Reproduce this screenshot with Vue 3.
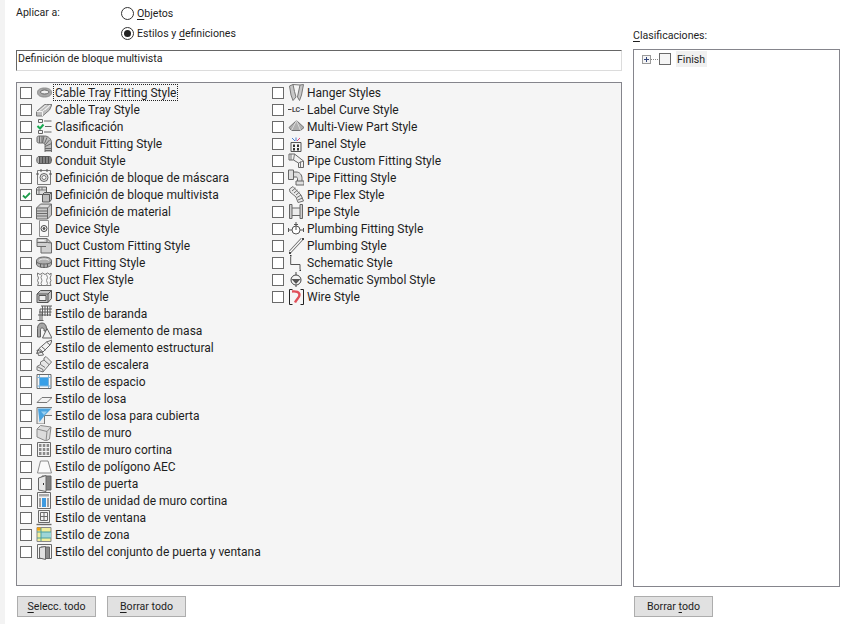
<script setup>
const G = '#5f5f5f'
const p = (d, f = 'none', s = G, w = 1) => ({ d, f, s, w })
const ribs = (xs, y1, y2) => xs.map(x => `M${x} ${y1}V${y2}`).join('')

const left = [
  ['Cable Tray Fitting Style', [p('M1.500 8.500C1.500 5.500 4.500 4 8.500 4s7 1.500 7 4.500-3 4.500-7 4.500-7-1.500-7-4.500z', '#a8a8a8', '#8a8a8a'), p('M4.500 8C4.500 7 6.500 6 8.500 6s4.500 1 4.500 2-2 2-4.500 2-4-1-4-2z', '#efefef', '#666')]],
  ['Cable Tray Style', [p('M.5 15V10.500L8.500 3.500h7.500L13.500 9 6.500 15z', '#bdbdbd', '#7a7a7a'), p('M.5 10.500H6.500V15M6.500 10.500L14 4M3 10L10.500 4M9 9l4.500-4', 'none', '#f2f2f2')]],
  ['Clasificación', [p('M2.500 1.500h4v3h-4zM2.500 12.500h4v3h-4zM8 3h7.500M9 8.500h6.500M8 14h7.500', 'none', '#666'), p('M1.500 8l2.500 2.500 3.500-4', 'none', '#15a84f', 2)]],
  ['Conduit Fitting Style', [p('M1 2.500C1 1.500 2 1 3 1h5.500c4 0 7 3 7 7v9.500H9V10.500C9 9 8 8 6.500 8H3C2 8 1 7.500 1 6.500z', '#bcbcbc', '#6a6a6a'), p(ribs([3.5, 6], 1, 8) + 'M8 1L6.500 8M11 2.500L8.500 8.500M13.500 5L9 10M15.500 8.500L9 11.500M9 13.500h6.500M9 15.500h6.500', 'none', '#6a6a6a')]],
  ['Conduit Style', [p('M3 4.500h10.500c1.200 0 2 1.500 2 3.500s-.8 3.500-2 3.500H3C1.500 11.500.8 10 .8 8S1.500 4.500 3 4.500z', '#b4b4b4', '#606060'), p(ribs([3.500, 5, 6.500, 8, 9.500, 11, 12.500, 14], 4.500, 11.500), 'none', '#505050')]],
  ['Definición de bloque de máscara', [p('M1.500 1.500h13v14h-13z', '#f4f4f4', '#7a7a7a'), p('M4 8.500a4 4 0 1 0 8 0a4 4 0 1 0-8 0z', '#e4e4e4', '#666'), p('M6 8.500a2 2 0 1 0 4 0a2 2 0 1 0-4 0z', '#fff', '#777'), p('M0 5h3M13 5h3M5 0v3M11 0v3', 'none', '#555')]],
  ['Definición de bloque multivista', [p('M.5 2.500L2 1h8.500v7.500H.5z', '#dcdcdc', '#5a5a5a'), p('M3 1v7.500M.5 4h10M6 1v3', 'none', '#777'), p('M6.500 8.500l2-2h7v7l-2 2.500h-7z', '#bdbdbd', '#5a5a5a'), p('M6.500 8.500h7V16M13.500 8.500l2-2', 'none', '#5a5a5a')]],
  ['Definición de material', [p('M.5 5L4.500 1h11v11l-4 4H.5z', '#c8c8c8', '#6a6a6a'), p('M.5 5h11v11M11.500 5l4-4M.5 8h11M.5 10.500h11M.5 13h11', 'none', '#6a6a6a'), p('M4.500 3h8', 'none', '#f2f2f2')]],
  ['Device Style', [p('M3.500 .5h9v16h-9z', '#f8f8f8', '#8f8f8f'), p('M5 8.500a3 3 0 1 0 6 0a3 3 0 1 0-6 0z', 'none', '#444'), p('M7 8.500a1 1 0 1 0 2 0a1 1 0 1 0-2 0z', '#666', '#444')]],
  ['Duct Custom Fitting Style', [p('M1 1.500h10L15.500 6v10H5V9.500H1z', '#cfcfcf', '#6a6a6a'), p('M1 5.500h10.500l4 .5M5 9.500h5M11 1.500v4', 'none', '#6a6a6a'), p('M2.500 3.500h6', 'none', '#f5f5f5')]],
  ['Duct Fitting Style', [p('M.5 7c0-2.500 3-4 7.500-4s7.500 1.500 7.500 4v3c0 2-3 3.500-7.500 3.500S.5 12 .5 10z', '#b0b0b0', '#5f5f5f'), p('M.5 7c0 2 3 3 7.500 3s7.500-1 7.500-3M4.500 10v3M8 10.500v3M11.500 10v3', 'none', '#5f5f5f'), p('M3 6.500c1-1 3-1.500 5-1.500s4 .5 5 1.500', 'none', '#eee')]],
  ['Duct Flex Style', [p('M1.500 2l2.500 1.500L6.500 2 9 3.500 11.500 2 14 3.500 15 2v2.500l-1 2.500 1 2.500-1 2.500 1 2.500H1.500l1-2.500-1-2.500 1-2.500-1-2.500z', '#f7f7f7', '#777'), p('M6 3.500l-1 3 1 3-1 3 1 2M10.500 3.500l1 3-1 3 1 3-1 2', 'none', '#888')]],
  ['Duct Style', [p('M1 6L4.500 2.500h11v8L12 14.500H1z', '#c4c4c4', '#555'), p('M3 7.500h7v5H3z', '#eee', '#555'), p('M1 6h11v8.500M12 6l3.500-3.500', 'none', '#555')]],
  ['Estilo de baranda', [p('M5 1h11M4 4h12M3 7h12.500M2 10h13', 'none', '#5f5f5f'), p('M6.500 1v10M9 1v10M11.500 1v10M14 1v10M4 4v11M6 7v9', 'none', '#5f5f5f'), p('M1.500 15.500h6', 'none', '#5f5f5f')]],
  ['Estilo de elemento de masa', [p('M1.500 15V6.500C1.500 3 3.500 1 6 1s4.500 2 4.500 5.500V9H8V7.500C8 6.500 7 6 6 6S4.500 6.500 4.500 7.500V15z', '#a6a6a6', '#5f5f5f'), p('M6.500 16L11 6.500 16 16z', '#efefef', '#5f5f5f')]],
  ['Estilo de elemento estructural', [p('M.5 14.500L3 9.500 10.500 3l5.500-2-1.500 4.500L7 13z', '#f2f2f2', '#666'), p('M1 11l5 2 1.500 3-5 .5zM3 9.500L7 13M5.500 7.500L9.500 11M10.500 3l3.500 3', 'none', '#666')]],
  ['Estilo de escalera', [p('M1 10.500l3.500-2V6L8 4V2L10 .5 15.500 6 7 16 1 14z', '#e6e6e6', '#777'), p('M4.500 8.500l4.500 3M8 4l5 4.500M1 10.500l6 3V16', 'none', '#777')]],
  ['Estilo de espacio', [p('M1 1.500h14v14H1z', '#f7f7f7', '#6a6a6a'), p('M3.500 4.500h9v8.500h-9z', '#38a0e8', 'none'), p('M1 4.500h14M3.500 2v13M1 13h14M12.500 2v13', 'none', '#7fb4da', 1)]],
  ['Estilo de losa', [p('M1 12.500L6 7.500h10l-5 5z', '#f2f2f2', '#777')]],
  ['Estilo de losa para cubierta', [p('M1 .5h15.500v8H8.500v8.500H1z', '#ececec', '#777'), p('M2 1.500h13.500L9 8 3.500 15z', '#4aa3df', 'none'), p('M5 4.500h6L8 8z', '#9cd0f0', 'none')]],
  ['Estilo de muro', [p('M1 5l3.500-3.500L15 3l-1.500 12-3.500 2-9-4z', '#dcdcdc', '#8a8a8a'), p('M1 5l10 2.500L15 3M11 7.500L10 17', 'none', '#8a8a8a')]],
  ['Estilo de muro cortina', [p('M1.500 1.500h13v14h-13z', '#f2f2f2', '#6a6a6a'), p('M3 3h2.500v3H3zM6.800 3h2.500v3H6.800zM10.600 3h2.500v3h-2.500zM3 7h2.500v3H3zM6.800 7h2.500v3H6.800zM10.600 7h2.500v3h-2.500zM3 11h2.500v3H3zM6.800 11h2.500v3H6.800zM10.600 11h2.500v3h-2.500z', '#8a8a8a', 'none')]],
  ['Estilo de polígono AEC', [p('M4.500 3H12l3.500 12H1.500z', '#fafafa', '#8a8a8a')]],
  ['Estilo de puerta', [p('M6 1h9v14H6z', '#808080', '#666'), p('M2.500 3L10 .5V16.500L2.500 15z', '#e8e8e8', '#666'), p('M7.500 8v2', 'none', '#333')]],
  ['Estilo de unidad de muro cortina', [p('M1.500 .5h13v16h-13z', '#f5f5f5', '#6a6a6a'), p('M3 2h10v2.500H3z', '#a8a8a8', 'none'), p('M3 6h2v9H3zM11 6h2v9h-2z', '#a0a0a0', 'none'), p('M6 6h4v9H6z', '#3f9be0', 'none')]],
  ['Estilo de ventana', [p('M2.500 1.500h11v12h-11z', '#f2f2f2', '#6a6a6a'), p('M4.500 3.500h7v8h-7zM8 3.500v8M4.500 7.500h7', 'none', '#6a6a6a'), p('M.5 15.500h15', 'none', '#6a6a6a', 1.4)]],
  ['Estilo de zona', [p('M1 1.500h14v14H1z', '#f2ee9a', '#888'), p('M1 1.500h4v3H1z', '#f2a20c', 'none'), p('M5 6h10v6H5z', '#9ed6d8', 'none'), p('M5 2v13M1 6h14M1 12h14', 'none', '#4a9fa0', 1)]],
  ['Estilo del conjunto de puerta y ventana', [p('M1.500 1.500h14v14h-14z', '#f5f5f5', '#6a6a6a'), p('M5 4h8.500v11.500H5z', '#8a8a8a', '#666'), p('M3.500 4.500L9.500 3.500v13L3.500 15z', '#e0e0e0', '#666')]],
]

const right = [
  ['Hanger Styles', [p('M1.500 2L5 .5l1.500 7L8 13l-3 3.500L3 11zM15.500 .5L12 1l-1.500 7-1 5 2 3.500 2-5.500z', '#c8c8c8', '#777'), p('M5 .5L12 1', 'none', '#777')]],
  ['Label Curve Style', [p('M0 8.500h3.500M12.500 8.500h3.500', 'none', '#444')], '-LC-'],
  ['Multi-View Part Style', [p('M8.500 2.500L16 9.500l-3.500 3h-9L1 9.500z', '#b0b0b0', '#707070'), p('M8.500 2.500L3.500 12.500M8.500 2.500l4 10', 'none', '#d8d8d8')]],
  ['Panel Style', [p('M3 7.500h10v9H3z', '#f4f4f4', '#555'), p('M5 9.500h2v2.500H5zM9 9.500h2v2.500H9zM5 13h2v2.500H5zM9 13h2v2.500H9z', '#333', 'none'), p('M8 6V2.500M7 6L4 3', 'none', '#4a7fd0'), p('M9 6l3-3', 'none', '#e0447a')]],
  ['Pipe Custom Fitting Style', [p('M1 2h5.500l9 7v6.500h-5V11L5.500 8H1z', '#f2f2f2', '#666'), p('M3 2v6M12.500 15.500V9.500M6.500 2L5.500 8M15.500 9l-5 2', 'none', '#777')]],
  ['Pipe Fitting Style', [p('M.5 1h5v2H8c4 0 6 3 6 6.500V12h2v4H8v-4h1.500V9.500c0-.8-.6-1.500-1.500-1.500H5.500v2.500h-5z', '#dedede', '#666'), p('M5.500 3v5M9.500 12h4.500', 'none', '#666')]],
  ['Pipe Flex Style', [p('M1.500 3L5 .5 13 9l2.500 6-5.500 1.500L8 11 2 6z', '#e8e8e8', '#707070'), p('M4 5l3.500-3M6 7l3.500-3M8 9l3.500-3M9 11.500l4-2.500M10 14l4.500-2', 'none', '#707070')]],
  ['Pipe Style', [p('M4 5h8v7.500H4z', '#ececec', 'none'), p('M1.500 1.500h2.500v14H1.500zM12 1.500h2.500v14H12z', '#cfcfcf', '#666'), p('M4 5h8M4 12.500h8', 'none', '#666')]],
  ['Plumbing Fitting Style', [p('M4 10a4 4 0 1 0 8 0a4 4 0 0 0-8 0z', '#fff', '#555'), p('M8 2v8M0 10h4M12 10h4M.5 8v4M15.500 8v4M6 4.500h4', 'none', '#555')]],
  ['Plumbing Style', [p('M2 15L14 2', 'none', '#6a6a6a', 3), p('M2 15L14 2', 'none', '#fff', 1.200), p('M1 15h2v2H1zM14 1h2v2h-2z', '#444', 'none')]],
  ['Schematic Style', [p('M2 1h1.500v1.500H2z', '#333', 'none'), p('M2.700 3v7.500H12V15', 'none', '#555'), p('M11.500 15.500H13V17h-1.500z', '#333', 'none')]],
  ['Schematic Symbol Style', [p('M3 9a5 5 0 1 0 10 0a5 5 0 1 0-10 0z', '#f4f4f4', '#444'), p('M3.500 8h9L8 13z', '#555', 'none'), p('M8 1v3M8 14v2', 'none', '#444')]],
  ['Wire Style', [p('M4.500 1.500H1.500V16.500H4.500M12.500 1.500h3V16.500H12.500', 'none', '#222'), p('M4 3.500C8 3 11.500 4 11.500 7c0 2.500-3 4-4.500 7.500', 'none', '#e0505a', 2.400)]],
]

const checked = 'Definición de bloque multivista'
const focused = 'Cable Tray Fitting Style'
const columns = [left, right]
</script>

<template>
  <div class="page">
    <div class="main">
      <div class="apply">
        <span class="apply-label">Aplicar a:</span>
        <div class="radios">
          <label class="radio"><i class="dot"></i><span><u>O</u>bjetos</span></label>
          <label class="radio"><i class="dot on"></i><span>Estilos y <u>d</u>efiniciones</span></label>
        </div>
      </div>
      <div class="field">Definición de bloque multivista</div>
      <div class="list">
        <div v-for="(col, c) in columns" :key="c" class="col">
          <div v-for="item in col" :key="item[0]" class="row">
            <span class="box">
              <svg v-if="item[0] === checked" viewBox="0 0 11 11" width="11" height="11"><path d="M2 5.500l2.300 2.300L9 3" fill="none" stroke="#1c9c4a" stroke-width="1.800" /></svg>
            </span>
            <svg class="icon" viewBox="0 0 16 17" width="16" height="17">
              <path v-for="(s, i) in item[1]" :key="i" :d="s.d" :fill="s.f" :stroke="s.s" :stroke-width="s.w" />
              <text v-if="item[2]" x="8" y="11" text-anchor="middle" class="icon-text">LC</text>
            </svg>
            <span class="name" :class="{ focus: item[0] === focused }">{{ item[0] }}</span>
          </div>
        </div>
      </div>
      <div class="buttons">
        <button class="btn"><u>S</u>elecc. todo</button>
        <button class="btn"><u>B</u>orrar todo</button>
      </div>
    </div>
    <div class="side">
      <div class="side-label"><u>C</u>lasificaciones:</div>
      <div class="tree">
        <div class="node">
          <span class="plus"></span>
          <span class="dots"></span>
          <span class="tree-box"></span>
          <span class="node-name">Finish</span>
        </div>
      </div>
      <div class="buttons side-buttons">
        <button class="btn">Borrar <u>t</u>odo</button>
      </div>
    </div>
  </div>
</template>

<style>
body { margin: 0; background: #fff; }
</style>

<style scoped>
.page {
  width: 844px;
  height: 624px;
  box-sizing: border-box;
  display: grid;
  grid-template-columns: 606px 207px;
  column-gap: 11px;
  padding-left: 16px;
  background: linear-gradient(90deg, #f3f3f3 5px, #fff 5px);
  font: 10.6px/16px Roboto, "Open Sans", sans-serif;
  color: #1e1e1e;
  overflow: hidden;
}
u { text-underline-offset: 2px; text-decoration-thickness: 1px; }
.main { display: flex; flex-direction: column; }
.apply { display: flex; height: 50px; padding-top: 4px; box-sizing: border-box; }
.apply-label { width: 105px; line-height: 16px; padding-top: 1px; }
.radios { display: flex; flex-direction: column; gap: 3px; }
.radio { display: flex; align-items: center; gap: 3px; height: 16px; padding-top: 1px; }
.radio span { padding-top: 1px; }
.dot {
  width: 13px; height: 13px; border-radius: 50%;
  border: 1px solid #333; background: #fff; box-sizing: border-box;
  position: relative;
}
.dot.on::after {
  content: ""; position: absolute; inset: 2px; border-radius: 50%; background: #222;
}
.field {
  height: 21px; box-sizing: border-box; padding-left: 1px; line-height: 16px;
  border: 1px solid #dcdcdc; border-top-color: #666; border-left-color: #666;
}
.list {
  margin-top: 11px; height: 504px; box-sizing: border-box;
  border: 1px solid #85858c; background: #f5f5f5;
  padding: 1px 0 0 3px; display: flex;
  font-size: 12px;
}
.col { width: 252px; display: flex; flex-direction: column; }
.row { display: flex; align-items: center; height: 17px; flex: none; }
.box {
  width: 12px; height: 12px; box-sizing: border-box; flex: none;
  border: 1px solid #6a6a6a; background: #fff; margin-top: 1px; display: flex;
  align-items: center; justify-content: center;
}
.box svg { flex: none; }
.icon { margin-left: 4px; flex: none; display: block; }
.icon-text { font: 700 7px Roboto, sans-serif; fill: #444; }
.name { padding: 1px 1px 0; white-space: nowrap; height: 17px; box-sizing: border-box; border: 1px solid transparent; margin-left: 1px; line-height: 15px; }
.name.focus { border: 1px dotted #222; }
.buttons { display: flex; gap: 11px; padding: 10px 0 0 1px; }
.btn {
  width: 79px; height: 21px; padding: 0; box-sizing: border-box;
  border: 1px solid #adadad; background: #e1e1e1; color: #1e1e1e;
  font: inherit; line-height: 17px;
}
.side { display: flex; flex-direction: column; }
.side-label { height: 49px; padding-top: 28px; box-sizing: border-box; }
.tree {
  height: 538px; box-sizing: border-box; border: 1px solid #85858c; background: #fff;
  padding: 1px 0 0 8px;
}
.side-buttons { padding-top: 9px; }
.node { display: flex; align-items: center; height: 16px; }
.plus {
  width: 9px; height: 9px; box-sizing: border-box; border: 1px solid #9a9a9a; flex: none;
  background:
    linear-gradient(#33457a, #33457a) center / 5px 1px no-repeat,
    linear-gradient(#33457a, #33457a) center / 1px 5px no-repeat,
    #f4f4f4;
}
.dots { width: 8px; height: 1px; flex: none; background: repeating-linear-gradient(90deg, #888 0 1px, transparent 1px 2px); }
.tree-box { width: 12px; height: 12px; box-sizing: border-box; border: 1px solid #6a6a6a; background: #f5f5f5; flex: none; }
.node-name { margin-left: 5px; padding: 1px 1px 0; background: #f0f0f0; height: 16px; width: 31px; box-sizing: border-box; line-height: 15px; }
</style>
